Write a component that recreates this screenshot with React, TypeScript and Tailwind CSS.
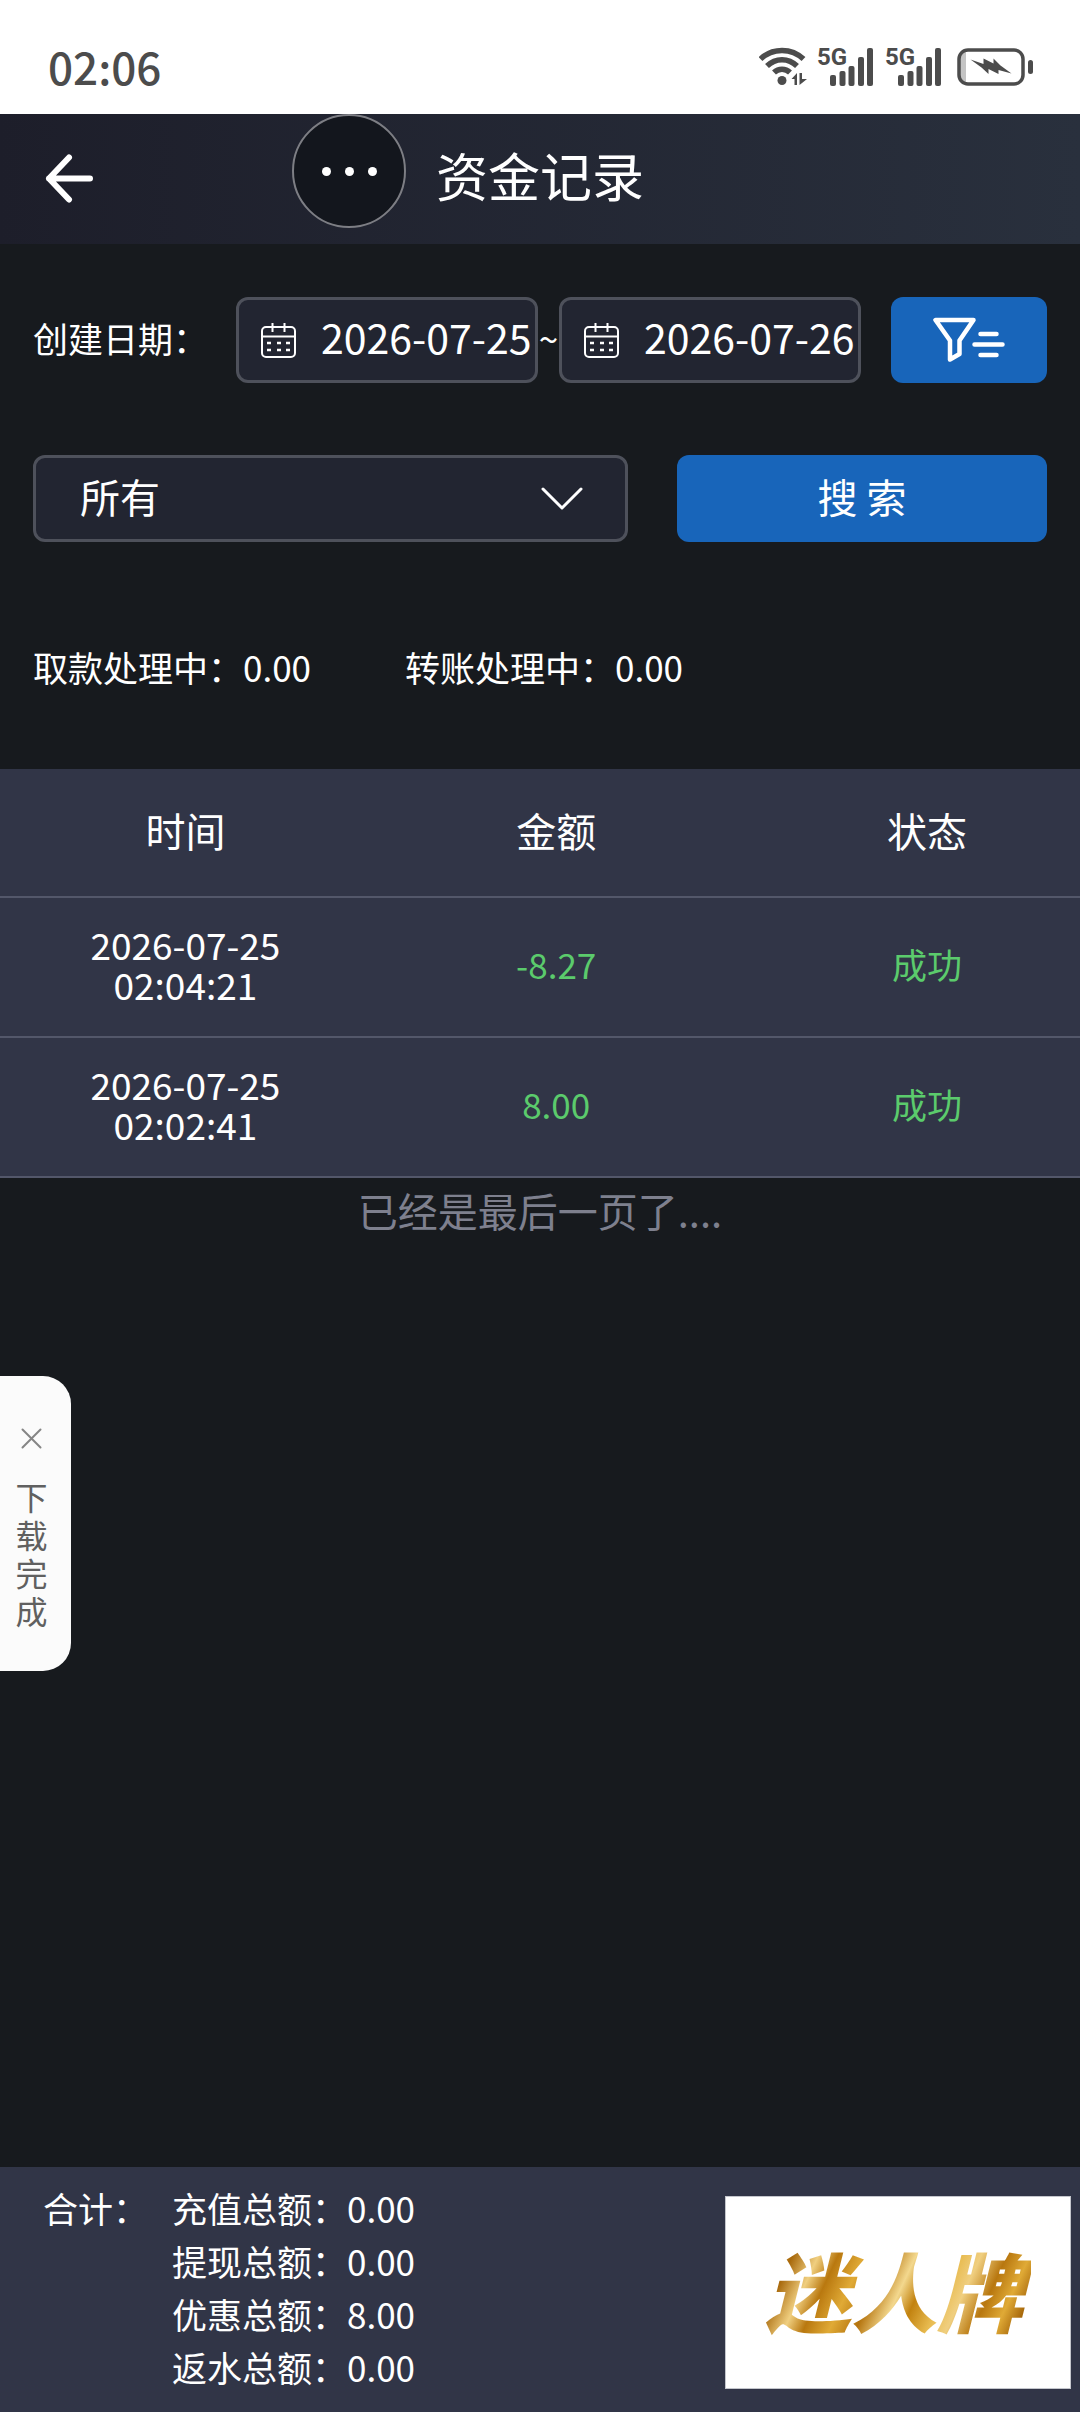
import { useState } from "react";

const records = [
  { date: "2026-07-25", time: "02:04:21", amount: "-8.27", status: "成功" },
  { date: "2026-07-25", time: "02:02:41", amount: "8.00", status: "成功" },
];

const totals = [
  { label: "充值总额", value: "0.00" },
  { label: "提现总额", value: "0.00" },
  { label: "优惠总额", value: "8.00" },
  { label: "返水总额", value: "0.00" },
];

function WifiIcon() {
  return (
    <svg width="48" height="40" viewBox="0 0 48 40" fill="none" aria-hidden="true">
      <g stroke="#4c4c4c" strokeWidth="5.5">
        <path d="M1.500 12C13.500 0.500 32.500 0.500 44.500 12" />
        <path d="M8 19C16.500 10.500 29.500 10.500 38 19" />
        <path d="M15 25.500C19.500 21 26.500 21 31 25.500" />
      </g>
      <circle cx="23" cy="33.500" r="4.500" fill="#4c4c4c" />
      <path d="M38 26v12h-2.500v-6h-3zM40.500 38V26H43v6h5z" fill="#4c4c4c" />
    </svg>
  );
}

function SignalIcon() {
  return (
    <div className="relative h-10 w-[57px]">
      <span className="absolute top-0 left-0 font-['Liberation_Sans_Narrow','Roboto',sans-serif] text-[24px] leading-5 font-bold">
        5G
      </span>
      <svg width="57" height="40" viewBox="0 0 57 40" fill="#4c4c4c" aria-hidden="true">
        <rect x="13" y="28" width="6" height="11" rx="2" />
        <rect x="22.500" y="24" width="6" height="15" rx="2" />
        <rect x="31.500" y="19" width="6" height="20" rx="2" />
        <rect x="41" y="10" width="6" height="29" rx="2" />
        <rect x="50" y="1" width="6" height="38" rx="2" />
      </svg>
    </div>
  );
}

function BatteryIcon() {
  return (
    <svg width="76" height="40" viewBox="0 0 76 40" fill="none" aria-hidden="true">
      <path d="M3 8q1-5 6-5v34q-5 0-6-5z" fill="#c4c4c4" />
      <rect x="2" y="3" width="64" height="34" rx="9" stroke="#4c4c4c" strokeWidth="3.500" />
      <rect x="71" y="13" width="5" height="14" rx="2.500" fill="#4c4c4c" />
      <path
        d="M13.500 12.500l13 4.500v-5.500l10 5v-5l7 7 11 8-13-3.500V27l-10-5v5l-7-6.500z"
        fill="#4c4c4c"
      />
    </svg>
  );
}

function CalendarIcon() {
  return (
    <svg
      className="shrink-0"
      width="36"
      height="36"
      viewBox="0 0 36 36"
      fill="none"
      stroke="white"
      strokeWidth="2"
      aria-hidden="true"
    >
      <rect x="1" y="5" width="33" height="30" rx="4" />
      <path d="M1 14.500h33M11.500 1v9M23.500 1v9" />
      <path d="M6 21h4M16 21h4M25 21h4M6 28h4M16 28h4M25 28h4" strokeWidth="2.500" />
    </svg>
  );
}

function DateField({ label, initial }: { label: string; initial: string }) {
  const [value, setValue] = useState(initial);
  return (
    <label className="flex h-[86px] min-w-0 flex-1 items-center gap-6 rounded-xl border-3 border-[#4e515b] bg-[#222531] pl-[22px]">
      <CalendarIcon />
      <input
        type="text"
        aria-label={label}
        value={value}
        onChange={(e) => setValue(e.target.value)}
        className="w-full min-w-0 bg-transparent pb-1.5 text-[41px] outline-none"
      />
    </label>
  );
}

export default function App() {
  return (
    <div className="relative flex min-h-screen flex-col bg-[#171a1e] font-['Noto_Sans_CJK_SC',sans-serif] text-[35px] text-white">
      <div className="flex h-[114px] items-center justify-between bg-white pt-5 pr-[47px] pl-12 text-[#4c4c4c]">
        <span className="pb-0.5 text-[44px] font-medium">02:06</span>
        <div className="flex items-center">
          <WifiIcon />
          <div className="ml-[10px] flex gap-[11px]">
            <SignalIcon />
            <SignalIcon />
          </div>
          <div className="ml-[15px]">
            <BatteryIcon />
          </div>
        </div>
      </div>

      <header className="relative flex h-[130px] items-center justify-center bg-linear-to-r from-[#1d1e2a] to-[#29303d]">
        <button type="button" aria-label="返回" className="absolute left-[45px]">
          <svg width="50" height="50" viewBox="0 0 50 50" fill="none" stroke="white" strokeWidth="6" strokeLinecap="round" strokeLinejoin="round" aria-hidden="true">
            <path d="M24 3.500L4 24.500l20 21M4 24.500h41" />
          </svg>
        </button>
        <h1 className="pb-2 text-[52px]">资金记录</h1>
        <button
          type="button"
          aria-label="更多"
          className="absolute top-0 left-[292px] flex size-[114px] items-center justify-center gap-[14px] rounded-full border-2 border-[#7d7e84] bg-[#13161d]"
        >
          <span className="size-[9px] rounded-full bg-white" />
          <span className="size-[9px] rounded-full bg-white" />
          <span className="size-[9px] rounded-full bg-white" />
        </button>
      </header>

      <main className="flex-1">
        <form className="px-[33px] pt-[53px]" onSubmit={(e) => e.preventDefault()}>
          <div className="flex items-center">
            <span className="w-[203px] shrink-0 pb-1">创建日期：</span>
            <DateField label="开始日期" initial="2026-07-25" />
            <span className="w-[21px] shrink-0 pb-1 text-center">~</span>
            <DateField label="结束日期" initial="2026-07-26" />
            <button
              type="button"
              aria-label="筛选"
              className="ml-[30px] flex h-[86px] w-[156px] shrink-0 items-center justify-center rounded-xl bg-[#1865ba]"
            >
              <svg width="72" height="46" viewBox="0 0 72 46" fill="none" stroke="white" strokeWidth="4.500" strokeLinecap="round" strokeLinejoin="round" aria-hidden="true">
                <path d="M2.500 3h38L26.500 23.500V37L17 42.500v-19z" />
                <path d="M47.500 17h16M41.500 27.500h28M47.500 38h16" />
              </svg>
            </button>
          </div>

          <div className="mt-[72px] flex gap-[49px] text-[40px]">
            <div className="relative flex-[595]">
              <select
                aria-label="类型"
                className="h-[87px] w-full appearance-none rounded-xl border-3 border-[#4e515b] bg-[#222531] pb-1.5 pl-11 outline-none"
              >
                <option>所有</option>
              </select>
              <svg className="pointer-events-none absolute top-8 right-11" width="44" height="26" viewBox="0 0 44 26" fill="none" stroke="white" strokeWidth="3" strokeLinecap="round" strokeLinejoin="round" aria-hidden="true">
                <path d="M3 2l19 19L41 2" />
              </svg>
            </div>
            <button type="submit" className="h-[87px] flex-[370] rounded-xl bg-[#1865ba] pb-1.5">
              搜 索
            </button>
          </div>
        </form>

        <div className="flex h-[227px] items-center pt-6 pl-[33px]">
          <p className="w-[372px]">取款处理中：0.00</p>
          <p>转账处理中：0.00</p>
        </div>

        <div className="overflow-hidden">
          <table className="w-[103%] table-fixed bg-[#313547] text-center">
            <thead className="text-[40px]">
              <tr className="h-[128px] border-b-2 border-[#53576a]">
                <th className="pb-1.5 font-normal">时间</th>
                <th className="pb-1.5 font-normal">金额</th>
                <th className="pb-1.5 font-normal">状态</th>
              </tr>
            </thead>
            <tbody>
              {records.map((record) => (
                <tr key={record.time} className="h-[140px] border-b-2 border-[#53576a]">
                  <td className="pb-1.5 text-[37px] leading-10">
                    <div>{record.date}</div>
                    <div>{record.time}</div>
                  </td>
                  <td className="pb-1.5 text-[#5bcb6c]">{record.amount}</td>
                  <td className="pb-1.5 text-[#5bcb6c]">{record.status}</td>
                </tr>
              ))}
            </tbody>
          </table>
        </div>
        <p className="pt-0.5 text-center text-[40px] text-[#7e808e]">已经是最后一页了....</p>
      </main>

      <aside className="absolute top-[1376px] left-0 flex h-[295px] w-[71px] flex-col items-center rounded-r-[28px] bg-[#fbfbfb] pt-[52px] pr-2 text-[#606060]">
        <button type="button" aria-label="关闭">
          <svg width="21" height="21" viewBox="0 0 21 21" stroke="#858585" strokeWidth="2" strokeLinecap="round" aria-hidden="true">
            <path d="M1.500 1.500l18 18M19.500 1.500l-18 18" />
          </svg>
        </button>
        <p className="mt-7 w-8 text-[32px] leading-[38px] break-all">下载完成</p>
      </aside>

      <footer className="flex h-[245px] items-start justify-between bg-[#313547] pr-[9px] pl-[43px] leading-[53px]">
        <div className="flex pt-3.5">
          <p className="w-[129px]">合计：</p>
          <ul>
            {totals.map((total) => (
              <li key={total.label}>
                {total.label}：{total.value}
              </li>
            ))}
          </ul>
        </div>
        <a
          href="#"
          className="mt-[29px] flex h-[193px] w-[346px] items-center justify-center border border-[#c4c6cc] bg-white pr-2 pb-2"
        >
          <span className="bg-[linear-gradient(115deg,#c08414_0%,#d9a02c_8%,#a8690c_14%,#f0cf80_22%,#b9780f_28%,#e0aa36_36%,#b5740e_44%,#f3d88e_52%,#c2820f_58%,#e8bb50_66%,#f0cf80_72%,#b8770f_80%,#e0aa36_87%,#a8690c_93%,#dca22e_100%)] bg-clip-text px-2 text-[86px] leading-[110px] font-black text-transparent italic">
            迷人牌
          </span>
        </a>
      </footer>
    </div>
  );
}
